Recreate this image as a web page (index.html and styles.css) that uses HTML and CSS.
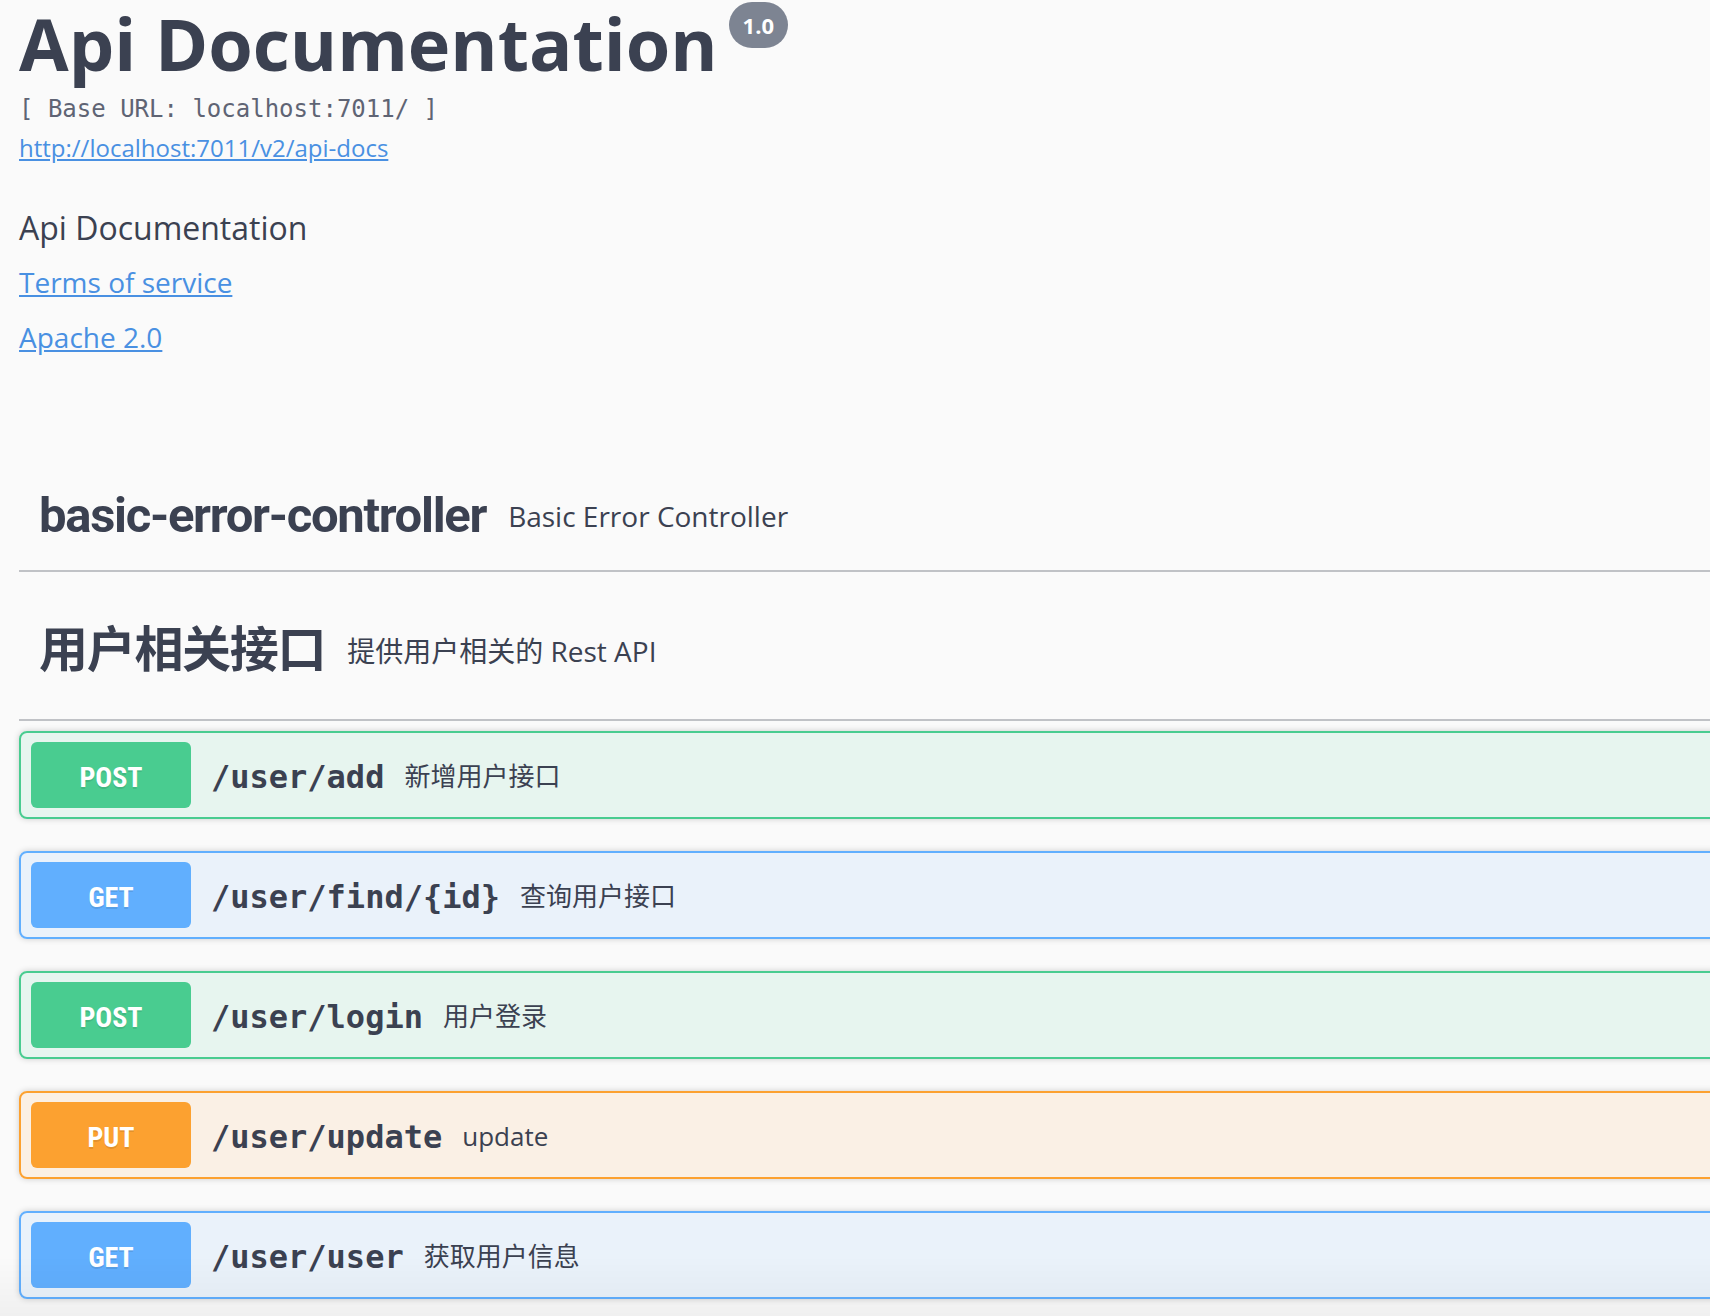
FILE: index.html
```html
<!DOCTYPE html>
<html lang="zh-CN">
<head>
<meta charset="utf-8">
<title>Api Documentation</title>
<link rel="stylesheet" href="styles.css">
</head>
<body>
<div class="page">
  <section class="info">
    <h2 class="title"><span class="title-text">Api Documentation</span><small class="version">1.0</small></h2>
    <div class="base-url">[ Base URL: localhost:7011/ ]</div>
    <div class="spec-url"><a href="#">http://localhost:7011/v2/api-docs</a></div>
    <div class="description">Api Documentation</div>
    <div class="info-link"><a href="#">Terms of service</a></div>
    <div class="info-link"><a href="#">Apache 2.0</a></div>
  </section>

  <section class="tag-section">
    <h3 class="tag tag--collapsed"><span class="tag-name">basic-error-controller</span><small class="tag-desc">Basic Error Controller</small></h3>
  </section>

  <section class="tag-section">
    <h3 class="tag"><span class="tag-name">用户相关接口</span><small class="tag-desc">提供用户相关的 Rest API</small></h3>
    <div class="operations">
      <div class="opblock opblock--post">
        <span class="method">POST</span>
        <span class="path">/user/add</span>
        <span class="summary">新增用户接口</span>
      </div>
      <div class="opblock opblock--get">
        <span class="method">GET</span>
        <span class="path">/user/find/{id}</span>
        <span class="summary">查询用户接口</span>
      </div>
      <div class="opblock opblock--post">
        <span class="method">POST</span>
        <span class="path">/user/login</span>
        <span class="summary">用户登录</span>
      </div>
      <div class="opblock opblock--put">
        <span class="method">PUT</span>
        <span class="path">/user/update</span>
        <span class="summary">update</span>
      </div>
      <div class="opblock opblock--get">
        <span class="method">GET</span>
        <span class="path">/user/user</span>
        <span class="summary">获取用户信息</span>
      </div>
    </div>
  </section>
</div>
<div class="bottom-shade"></div>
</body>
</html>
```
FILE: styles.css
```css
html, body {
  margin: 0;
  padding: 0;
  background: #fafafa;
  overflow: hidden;
}

body {
  color: #3b4151;
  font-family: "Open Sans", "Noto Sans CJK SC", sans-serif;
}

.page {
  width: 1800px;
  padding-left: 19px;
}

/* ---------- info ---------- */
.info {
  margin-bottom: 91px;
}

.title {
  display: flex;
  align-items: flex-start;
  margin: 0;
  font-family: "Open Sans", sans-serif;
  font-weight: 700;
  font-size: 72px;
  color: #3b4151;
}

.title-text {
  padding-top: 7px;
  line-height: 72px;
}

.version {
  margin: 2px 0 0 11px;
  padding: 0 14px;
  height: 46px;
  line-height: 46px;
  border-radius: 57px;
  background: #7d8492;
  color: #fff;
  font-family: "Open Sans", sans-serif;
  font-size: 22px;
  font-weight: 700;
}

.base-url {
  margin-top: 16px;
  line-height: 28px;
  font-family: "DejaVu Sans Mono", monospace;
  font-size: 24px;
  color: #5f6474;
}

.spec-url {
  margin-top: 8px;
  line-height: 33px;
  font-size: 24px;
}

a {
  color: #4990e2;
  text-decoration: underline;
}

.description {
  margin-top: 42px;
  line-height: 44px;
  font-size: 32px;
}

.info-link {
  line-height: 38px;
  font-size: 28px;
  margin-top: 17px;
}

.description + .info-link {
  margin-top: 13px;
}

/* ---------- tags ---------- */
.tag-section {
  display: flex;
  flex-direction: column;
}

.tag {
  display: flex;
  align-items: center;
  margin: 0 0 10px;
  padding: 40px 40px 39px 20px;
  border-bottom: 2px solid rgba(59, 65, 81, .3);
  font-weight: 700;
}

.tag--collapsed {
  padding-bottom: 25px;
}

.tag-name {
  font-family: Roboto, "Noto Sans CJK SC", sans-serif;
  font-size: 49px;
  line-height: 58px;
  letter-spacing: -1.3px;
  font-weight: 700;
}

.tag-desc {
  padding: 0 22px;
  font-family: "Open Sans", "Noto Sans CJK SC", sans-serif;
  font-size: 28px;
  line-height: 38px;
  font-weight: 400;
}

/* ---------- operations ---------- */
.opblock {
  display: flex;
  align-items: center;
  box-sizing: border-box;
  height: 88px;
  margin: 0 0 32px;
  padding: 0 10px;
  border: 2px solid;
  border-radius: 8px;
  box-shadow: 0 0 6px rgba(0, 0, 0, .19);
}

.method {
  box-sizing: border-box;
  width: 160px;
  height: 66px;
  padding-top: 5px;
  line-height: 61px;
  border-radius: 6px;
  text-align: center;
  color: #fff;
  font-family: "Roboto Condensed", Roboto, sans-serif;
  font-size: 28px;
  font-weight: 700;
  text-shadow: 0 2px 0 rgba(0, 0, 0, .1);
}

.path {
  padding: 4px 20px 0;
  line-height: 38px;
  font-family: "DejaVu Sans Mono", monospace;
  font-size: 32px;
  font-weight: 700;
  color: #3b4151;
}

.summary {
  padding-top: 2px;
  line-height: 36px;
  font-family: "Open Sans", "Noto Sans CJK SC", sans-serif;
  font-size: 26px;
  color: #3b4151;
}

.opblock--post {
  border-color: #49cc90;
  background: rgba(73, 204, 144, .1);
}
.opblock--post .method { background: #49cc90; }

.opblock--get {
  border-color: #61affe;
  background: rgba(97, 175, 254, .1);
}
.opblock--get .method { background: #61affe; }

.opblock--put {
  border-color: #fca130;
  background: rgba(252, 161, 48, .1);
}
.opblock--put .method { background: #fca130; }

.bottom-shade {
  position: fixed;
  left: 0;
  right: 0;
  bottom: 0;
  height: 60px;
  background: linear-gradient(to bottom, rgba(0, 0, 0, 0), rgba(0, 0, 0, .04));
  pointer-events: none;
}
```
